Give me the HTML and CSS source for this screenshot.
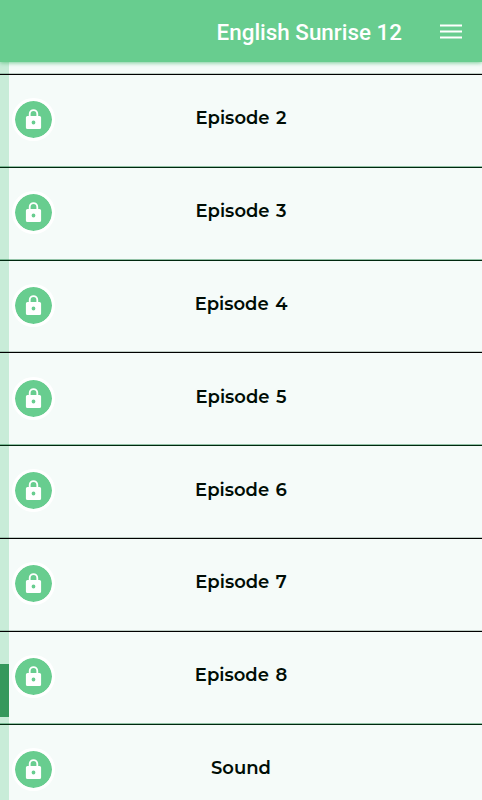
FILE: index.html
```html
<!DOCTYPE html>
<html lang="en">
<head>
<meta charset="utf-8">
<title>English Sunrise 12</title>
<link rel="stylesheet" href="styles.css">
</head>
<body>
<svg class="defs" width="0" height="0" aria-hidden="true">
  <symbol id="lock" viewBox="0 0 17 21">
    <path d="M4.700 8V4.900a3.800 3.800 0 0 1 7.600 0v3.100" fill="none" stroke="#fff" stroke-width="1.800"/>
    <path fill="#fff" fill-rule="evenodd" d="M2.500 7h12q1.600 0 1.600 1.600v9.800q0 1.600-1.600 1.600h-12q-1.600 0-1.600-1.600V8.600q0-1.600 1.600-1.600zM8.500 11.600a1.900 1.900 0 1 0 0 3.800 1.900 1.900 0 0 0 0-3.800z"/>
  </symbol>
</svg>
<header class="bar">
  <h1 class="title">English Sunrise 12</h1>
  <svg class="menu" width="22" height="16" viewBox="0 0 22 16"><path d="M0 1.500h22M0 7.500h22M0 13.500h22" stroke="#fff" stroke-width="2.200"/></svg>
</header>
<main class="content">
  <div class="track"><div class="thumb"></div></div>
  <ul class="list">
    <li class="row"><span class="badge"><svg class="lock"><use href="#lock"/></svg></span><span class="label">Episode 2</span></li>
    <li class="row green"><span class="badge"><svg class="lock"><use href="#lock"/></svg></span><span class="label">Episode 3</span></li>
    <li class="row green"><span class="badge"><svg class="lock"><use href="#lock"/></svg></span><span class="label">Episode 4</span></li>
    <li class="row"><span class="badge"><svg class="lock"><use href="#lock"/></svg></span><span class="label">Episode 5</span></li>
    <li class="row green"><span class="badge"><svg class="lock"><use href="#lock"/></svg></span><span class="label">Episode 6</span></li>
    <li class="row"><span class="badge"><svg class="lock"><use href="#lock"/></svg></span><span class="label">Episode 7</span></li>
    <li class="row"><span class="badge"><svg class="lock"><use href="#lock"/></svg></span><span class="label">Episode 8</span></li>
    <li class="row green"><span class="badge"><svg class="lock"><use href="#lock"/></svg></span><span class="label">Sound</span></li>
  </ul>
</main>
</body>
</html>
```
FILE: styles.css
```css
* { box-sizing: border-box; }
body {
  margin: 0;
  height: 800px;
  overflow: hidden;
  display: flex;
  flex-direction: column;
  background: #f5fbf9;
}
.defs { position: absolute; }
.bar {
  flex: none;
  height: 62px;
  display: flex;
  align-items: center;
  justify-content: flex-end;
  gap: 38px;
  padding: 1px 20px 0 0;
  background: #68cd8f;
  box-shadow: 0 1px 4px rgba(80, 190, 120, .75);
  position: relative;
  z-index: 2;
}
.title {
  margin: 0;
  font: 500 22.4px/30px Roboto, sans-serif;
  color: #fff;
  white-space: nowrap;
}
.menu { display: block; }
.content {
  flex: 1;
  min-height: 0;
  position: relative;
  overflow: hidden;
  padding-top: 11.8px;
}
.track {
  position: absolute;
  inset: 0 auto 0 0;
  width: 9px;
  padding-top: 602px;
  background: #c8ecd8;
}
.thumb { height: 53px; background: #35985c; }
.list {
  position: relative;
  margin: 0;
  padding: 0;
  list-style: none;
}
.row {
  height: 92.86px;
  display: grid;
  grid-template-columns: 43px 1fr 43px;
  align-items: start;
  padding: 0 12px;
  border-top: 1px solid #000;
  box-shadow: 0 -1px 0 rgba(0, 40, 20, .22);
}
.green {
  border-top-color: #00280f;
  box-shadow: 0 -1px 0 rgba(0, 110, 45, .4);
}
.badge {
  width: 43px;
  height: 43px;
  margin-top: 23.2px;
  border: 3px solid #fff;
  border-radius: 50%;
  background: #68cd8f;
  background-clip: padding-box;
  display: flex;
  align-items: center;
  justify-content: center;
}
.lock { width: 17px; height: 21px; }
.label {
  margin-top: 30.3px;
  text-align: center;
  font: 600 18px/26px Montserrat, Inter, sans-serif;
  word-spacing: 1.5px;
  color: #000d05;
}
```
